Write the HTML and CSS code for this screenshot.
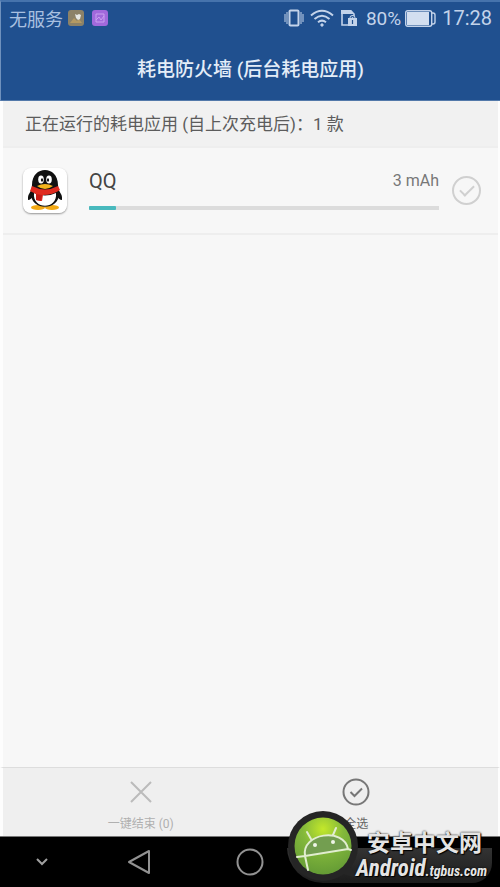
FILE: index.html
```html
<!DOCTYPE html>
<html lang="zh-CN">
<head>
    <meta charset="UTF-8">
    <meta name="viewport" content="width=device-width, initial-scale=1.0">
    <title>耗电防火墙</title>
    <link rel="stylesheet" href="styles.css">
</head>
<body>
    <header class="top">
        <div class="status-bar">
            <span class="carrier">无服务</span>
            <svg class="notice" width="16" height="16" viewBox="0 0 16 16">
                <rect width="16" height="16" rx="3" fill="#8c8268"/>
                <path d="M2 13l4-5 3 3 2-2 3 4z" fill="#b49a63"/>
                <path d="M7 4l2 1 2-1 2 1-1 4-2 1-2-2z" fill="#e6e8e4"/>
            </svg>
            <svg class="notice" width="16" height="16" viewBox="0 0 16 16">
                <rect width="16" height="16" rx="3" fill="#a169dc"/>
                <path d="M4 4h8v8H4zM4 10l3-3 2 3 3-4" fill="none" stroke="#c9a0f0"/>
            </svg>
            <div class="status-right">
                <svg width="20" height="18" viewBox="0 0 20 18" fill="none" stroke="#c3d3ea">
                    <rect x="5.500" y="1.500" width="9" height="15" rx="1" stroke-width="2"/>
                    <path d="M1 5v8M3 3v12M17 3v12M19 5v8"/>
                </svg>
                <svg width="24" height="18" viewBox="0 0 24 18" fill="none" stroke="#c3d3ea" stroke-width="2">
                    <path d="M1 6.500Q12-3 23 6.500M4.500 10Q12 3.500 19.500 10M8 13.200Q12 10 16 13.200"/>
                    <circle cx="12" cy="16" r="1.200" fill="#c3d3ea" stroke-width="1"/>
                </svg>
                <svg width="18" height="18" viewBox="0 0 18 18">
                    <path d="M8 16H2V2h9l3 3v3" fill="none" stroke="#c3d3ea" stroke-width="1.600"/>
                    <path d="M1 1h10l3 4H1z" fill="#c3d3ea"/>
                    <path d="M8 9h1.500c0-4 6-4 6 0H17v8H8z" fill="#c3d3ea"/>
                    <path d="M11 9c0-2 3-2 3 0M12.500 11v4" fill="none" stroke="#20508f" stroke-width="1.200"/>
                </svg>
                <span class="percent">80%</span>
                <svg width="31" height="17" viewBox="0 0 31 17">
                    <rect x=".7" y=".7" width="26" height="15.600" rx="2" fill="none" stroke="#c3d3ea" stroke-width="1.400"/>
                    <rect x="2" y="2" width="22" height="13" fill="#d3dff0"/>
                    <path d="M27 3h1q2 0 2 2v7q0 2-2 2h-1" fill="none" stroke="#c3d3ea" stroke-width="1.400"/>
                </svg>
                <time class="clock">17:28</time>
            </div>
        </div>
        <h1>耗电防火墙 (后台耗电应用)</h1>
    </header>

    <main>
        <h2>正在运行的耗电应用 (自上次充电后)：1 款</h2>
        <ul class="app-list">
            <li class="app">
                <svg class="app-icon" width="44" height="45" viewBox="0 0 44 45">
                    <rect width="44" height="45" rx="8" fill="#fff"/>
                    <ellipse cx="15" cy="39.500" rx="7" ry="2.500" fill="#f3a914"/>
                    <ellipse cx="29" cy="39.500" rx="7" ry="2.500" fill="#f3a914"/>
                    <path d="M10 20q-6 7-5 12 3 0 6-5zM34 20q6 7 5 12-3 0-6-5z" fill="#111"/>
                    <path d="M9 17C9-3 35-3 35 17l1 9C36 43 8 43 8 26z" fill="#111"/>
                    <path d="M11 25q11 5 22 0c2 17-24 17-22 0z" fill="#fff"/>
                    <path d="M9 18q13 7 26 0l2 4q-7 5-17 5l-1 6-6-1v-6l-6-3z" fill="#e02b20"/>
                    <path d="M13 26l6 1-1 6-5-1z" fill="#c61b16"/>
                    <ellipse cx="18" cy="11.500" rx="2.800" ry="4" fill="#fff"/>
                    <ellipse cx="26" cy="11.500" rx="2.800" ry="4" fill="#fff"/>
                    <ellipse cx="19" cy="12" rx="1.100" ry="1.800" fill="#111"/>
                    <ellipse cx="25" cy="12" rx="1.100" ry="1.800" fill="#111"/>
                    <path d="M14 18q8-4 16 0-8 6-16 0z" fill="#f4b51d"/>
                </svg>
                <div class="app-info">
                    <div class="app-text">
                        <label class="app-name" for="pick-qq">QQ</label>
                        <span class="usage">3 mAh</span>
                    </div>
                    <progress value="27" max="350" aria-label="QQ 耗电"></progress>
                </div>
                <input type="checkbox" id="pick-qq" class="pick">
            </li>
        </ul>
    </main>

    <div class="actions">
        <button type="button" class="action" disabled>
            <svg width="28" height="28" viewBox="0 0 28 28" fill="none" stroke="#bbb" stroke-width="2">
                <path d="M4 4l20 20M24 4L4 24"/>
            </svg>
            一键结束 (0)
        </button>
        <button type="button" class="action">
            <svg width="28" height="28" viewBox="0 0 28 28" fill="none" stroke="#777" stroke-width="2">
                <circle cx="14" cy="14" r="12.500"/>
                <path d="M8.500 14l4 4 7.500-7.500"/>
            </svg>
            全选
        </button>
    </div>

    <nav class="nav-bar">
        <button type="button" aria-label="收起">
            <svg width="14" height="10" viewBox="0 0 14 10" fill="none" stroke="#a0a0a0" stroke-width="2">
                <path d="M2 2l5 5 5-5"/>
            </svg>
        </button>
        <button type="button" aria-label="返回">
            <svg width="24" height="26" viewBox="0 0 24 26" fill="none" stroke="#929292" stroke-width="2" stroke-linejoin="round">
                <path d="M22 2v22L2 13z"/>
            </svg>
        </button>
        <button type="button" aria-label="主页">
            <svg width="28" height="28" viewBox="0 0 28 28" fill="none" stroke="#929292" stroke-width="2">
                <circle cx="14" cy="14" r="12.500"/>
            </svg>
        </button>
    </nav>

    <a class="watermark" href="#">
        <svg class="badge" width="74" height="74" viewBox="0 0 74 74">
            <defs>
                <radialGradient id="lime" cx=".5" cy=".2" r=".8">
                    <stop offset="0" stop-color="#c3e82a"/>
                    <stop offset=".45" stop-color="#83b83b"/>
                    <stop offset="1" stop-color="#649b35"/>
                </radialGradient>
            </defs>
            <path d="M52 64l18 5-9-16z" fill="#252525"/>
            <circle cx="36" cy="37" r="35" fill="#252525"/>
            <circle cx="36" cy="37" r="28.500" fill="url(#lime)"/>
            <path d="M18 47C14 24 57 18 61 40z" fill="#739e50"/>
            <path d="M10 48l8-1 43-7 3 1M18 47C14 24 57 18 61 40M18 47l3 14M24 30l-4-7M46 26l3-7" fill="none" stroke="#e1edcf" stroke-width="2" stroke-linecap="round"/>
            <circle cx="28" cy="36" r="2" fill="#eff5e8"/>
            <circle cx="46" cy="33" r="2" fill="#eff5e8"/>
        </svg>
        <span class="brand">
            <span class="brand-cn">安卓中文网</span>
            <span class="brand-en">Android<small>.tgbus.com</small></span>
        </span>
    </a>
</body>
</html>
```

FILE: styles.css
```css
* {
    box-sizing: border-box;
}

body {
    margin: 0;
    min-height: 100vh;
    display: flex;
    flex-direction: column;
    position: relative;
    background: #f7f7f7;
    font-family: Roboto, "Noto Sans CJK SC", sans-serif;
}

h1,
h2,
ul {
    margin: 0;
    padding: 0;
    font-weight: 400;
}

button {
    padding: 0;
    border: none;
    background: none;
    font-family: inherit;
}

/* Header */
.top {
    height: 101px;
    background: #20508f;
    border-top: 2px solid #4673ac;
    border-left: 1px solid #6f91bd;
    border-bottom: 1px solid #5379aa;
}

.status-bar {
    display: flex;
    align-items: center;
    height: 32px;
    padding: 0 8px;
    color: #c3d3ea;
    font-size: 18px;
}

.notice {
    margin-left: 8px;
}

.carrier {
    margin-right: -3px;
    color: #a9c0e0;
}

.status-right {
    display: flex;
    align-items: center;
    gap: 6px;
    margin-left: auto;
}

.percent {
    margin-left: 2px;
    font-size: 19px;
}

.percent + svg {
    margin-left: -2px;
}

.clock {
    font-size: 20px;
}

h1 {
    padding-top: 22px;
    color: #e4edf8;
    font-size: 19px;
    font-weight: 500;
    line-height: 28px;
    text-align: center;
}

/* App list */
main {
    flex: 1;
    border-left: 3px solid #fdfdfd;
    border-right: 2px solid #fdfdfd;
}

h2 {
    padding: 2px 22px 0;
    background: #f1f1f1;
    border-bottom: 2px solid #eee;
    color: #5c5c5c;
    font-size: 17px;
    line-height: 43px;
}

.app-list {
    list-style: none;
}

.app {
    display: flex;
    align-items: center;
    height: 87px;
    padding: 0 17px 0 20px;
    border-bottom: 2px solid #eee;
}

.app-icon {
    border-radius: 8px;
    box-shadow: 0 1px 2px rgba(0, 0, 0, 0.4);
}

.app-info {
    flex: 1;
    margin: 0 13px 0 22px;
}

.app-text {
    display: flex;
    justify-content: space-between;
    height: 35px;
    line-height: 20px;
}

.app-name {
    color: #444;
    font-size: 20px;
}

.usage {
    color: #777;
    font-size: 16px;
}

progress {
    display: block;
    width: 100%;
    height: 4px;
    border: none;
    appearance: none;
    background: #dcdcdc;
}

progress::-webkit-progress-bar {
    background: #dcdcdc;
}

progress::-webkit-progress-value {
    background: #48b9bd;
    border-radius: 1px;
}

.pick {
    display: grid;
    place-items: center;
    width: 29px;
    height: 29px;
    margin: 0;
    border: 2px solid #d0d0d0;
    border-radius: 50%;
    appearance: none;
}

.pick::before {
    content: "";
    width: 12px;
    height: 6px;
    margin-bottom: 4px;
    border: solid #d0d0d0;
    border-width: 0 0 2px 2px;
    transform: rotate(-45deg);
}

.pick:checked,
.pick:checked::before {
    border-color: #48b9bd;
}

/* Bottom actions */
.actions {
    display: flex;
    height: 69px;
    padding: 0 34px 0 30px;
    background: #efefef;
    border-top: 1px solid #ddd;
    border-left: 3px solid #fdfdfd;
    border-right: 2px solid #fdfdfd;
}

.action {
    flex: 1;
    display: flex;
    flex-direction: column;
    align-items: center;
    gap: 9px;
    padding-top: 10px;
    color: #666;
    font-size: 12px;
    line-height: 18px;
}

.action:disabled {
    color: #b0b0b0;
}

.nav-bar {
    display: grid;
    grid-template-columns: 84fr 110fr 112fr 110fr 84fr;
    height: 51px;
    background: #000;
    border-top: 1px solid #777;
}

.nav-bar button {
    display: flex;
    align-items: center;
    justify-content: center;
}

/* Site mark over the bottom corner */
.watermark {
    position: absolute;
    right: 8px;
    bottom: 4px;
    display: flex;
    align-items: flex-end;
    color: #e4e4e4;
    text-decoration: none;
    background: linear-gradient(transparent 53%, #333 53%, #1c1c1c) no-repeat;
    border-radius: 0 20px 20px 36px;
}

.brand {
    width: 136px;
    margin-left: -5px;
    padding-bottom: 1px;
}

.brand-cn,
.brand-en {
    display: block;
    font-weight: 700;
    white-space: nowrap;
    text-shadow: 0 0 2px #000, 1px 1px 1px #000;
}

.brand-cn {
    padding-left: 11px;
    font-size: 23px;
    line-height: 28px;
}

.brand-en {
    font-family: "Liberation Sans Narrow", "Roboto Condensed", "Liberation Sans", sans-serif;
    font-size: 23px;
    font-style: italic;
    line-height: 22px;
}

.brand-en small {
    font-size: 14px;
}
```
